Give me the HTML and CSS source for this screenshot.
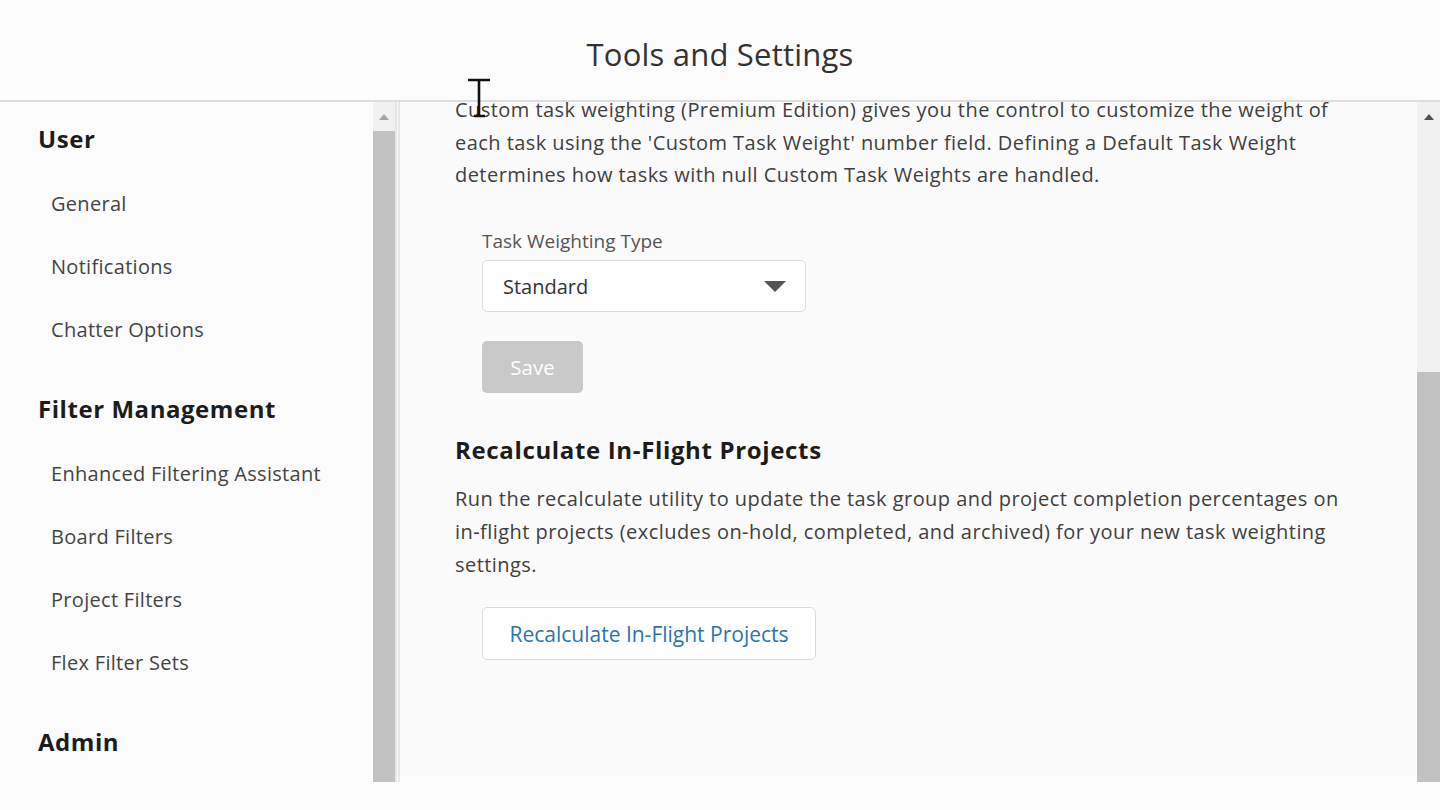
FILE: index.html
```html
<!DOCTYPE html>
<html>
<head>
<meta charset="utf-8">
<link rel="stylesheet" href="styles.css">
</head>
<body>
<div class="app">
  <header class="topbar">
    <h1 class="title">Tools and Settings</h1>
  </header>
  <div class="main">
    <nav class="side">
      <div class="side-inner">
        <div class="group-title">User</div>
        <div class="item">General</div>
        <div class="item">Notifications</div>
        <div class="item">Chatter Options</div>
        <div class="group-title spaced">Filter Management</div>
        <div class="item">Enhanced Filtering Assistant</div>
        <div class="item">Board Filters</div>
        <div class="item">Project Filters</div>
        <div class="item">Flex Filter Sets</div>
        <div class="group-title spaced">Admin</div>
      </div>
    </nav>
    <div class="scrollbar side-scroll">
      <div class="arrow light"></div>
      <div class="thumb side-thumb"></div>
    </div>
    <div class="divider"></div>
    <section class="content">
      <div class="content-inner">
        <p class="para">Custom task weighting (Premium Edition) gives you the control to customize the weight of each task using the 'Custom Task Weight' number field. Defining a Default Task Weight determines how tasks with null Custom Task Weights are handled.</p>
        <div class="field">
          <div class="label">Task Weighting Type</div>
          <div class="select">
            <span>Standard</span>
            <span class="caret"></span>
          </div>
          <button class="btn-save">Save</button>
        </div>
        <h2 class="section-title">Recalculate In-Flight Projects</h2>
        <p class="para para-2">Run the recalculate utility to update the task group and project completion percentages on in&#8209;flight projects (excludes on&#8209;hold, completed, and archived) for your new task weighting settings.</p>
        <div class="field">
          <button class="btn-outline">Recalculate In-Flight Projects</button>
        </div>
      </div>
    </section>
    <div class="scrollbar main-scroll">
      <div class="arrow dark"></div>
      <div class="track-space"></div>
      <div class="thumb main-thumb"></div>
    </div>
  </div>
  <div class="bottom"></div>
  <svg class="cursor" width="26" height="42" viewBox="0 0 26 42">
    <path d="M2 2 H24 M13 2 V38 M8 38 H19" stroke="#111" stroke-width="2.6" fill="none"/>
  </svg>
</div>
</body>
</html>
```
FILE: styles.css
```css
* { box-sizing: border-box; }
html, body { margin: 0; padding: 0; }
body {
  background: #fcfcfc;
  font-family: "Open Sans", "Noto Sans", sans-serif;
  color: #3e3e3e;
  width: 1440px;
  height: 810px;
  overflow: hidden;
}
.app { position: relative; width: 1440px; height: 810px; }
.topbar {
  position: relative;
  z-index: 1;
  height: 102px;
  border-bottom: 2px solid #dedede;
  background: #fcfcfc;
  display: flex;
  justify-content: center;
}
.title {
  margin: 0;
  padding-top: 32px;
  font-size: 31px;
  font-weight: 400;
  color: #333;
  line-height: 44px;
  letter-spacing: 0.2px;
}
.main {
  display: flex;
  height: 680px;
  background: #fbfbfb;
}
.side {
  width: 373px;
  overflow: hidden;
  background: #fcfcfc;
}
.side-inner { padding: 4px 0 0 38px; }
.group-title {
  font-weight: 700;
  font-size: 24px;
  line-height: 66px;
  letter-spacing: 0.55px;
  color: #1c1c1c;
}
.group-title.spaced { margin-top: 15px; }
.item {
  font-size: 20px;
  line-height: 63px;
  padding-left: 13px;
  letter-spacing: 0.3px;
  color: #444;
}
.scrollbar {
  display: flex;
  flex-direction: column;
  background: #f1f1f1;
}
.side-scroll { width: 22px; }
.main-scroll { width: 23px; }
.arrow {
  height: 29px;
  display: flex;
  align-items: center;
  justify-content: center;
}
.arrow::before {
  content: "";
  border-left: 5px solid transparent;
  border-right: 5px solid transparent;
  border-bottom: 6px solid #a3a3a3;
}
.arrow.dark::before { border-bottom-color: #505050; }
.thumb { background: #c2c2c2; }
.side-thumb { flex: 1; }
.track-space { height: 241px; }
.main-thumb { flex: 1; }
.divider {
  width: 5px;
  background: linear-gradient(to right, #e6e6e6 0 2px, #fcfcfc 2px 3px, #e8e8e8 3px 5px);
}
.content {
  flex: 1;
  background: #fbfbfb;
}
.content-inner { padding: 0 62px 0 55px; margin-top: -8px; }
.para {
  margin: 0;
  font-size: 20px;
  line-height: 32.7px;
  letter-spacing: 0.45px;
  color: #404040;
}
.para-2 { line-height: 33px; }
.field { padding-left: 27px; }
.label {
  margin-top: 37px;
  font-size: 19px;
  line-height: 24px;
  color: #555;
}
.select {
  margin-top: 7px;
  width: 324px;
  height: 52px;
  border: 1px solid #dcdcdc;
  border-radius: 5px;
  background: #fff;
  display: flex;
  align-items: center;
  justify-content: space-between;
  padding: 0 19px 0 20px;
  font-size: 20px;
  color: #333;
}
.caret {
  border-left: 11px solid transparent;
  border-right: 11px solid transparent;
  border-top: 11px solid #555;
}
.btn-save {
  display: block;
  margin-top: 29px;
  width: 101px;
  height: 52px;
  border: none;
  border-radius: 5px;
  background: #c9c9c9;
  color: #fff;
  font-family: inherit;
  font-size: 20.5px;
  padding: 0;
}
.section-title {
  margin: 41px 0 0;
  font-size: 24px;
  font-weight: 700;
  line-height: 32px;
  letter-spacing: 0.65px;
  color: #1c1c1c;
}
.section-title + .para { margin-top: 16px; }
.btn-outline {
  display: block;
  margin-top: 26px;
  width: 334px;
  height: 53px;
  border: 1px solid #dcdcdc;
  border-radius: 5px;
  background: #fff;
  color: #2a74ad;
  font-family: inherit;
  font-size: 21px;
  padding: 0;
}
.bottom { height: 28px; background: #fcfcfc; }
.cursor { position: absolute; z-index: 2; left: 466px; top: 78px; }
```
